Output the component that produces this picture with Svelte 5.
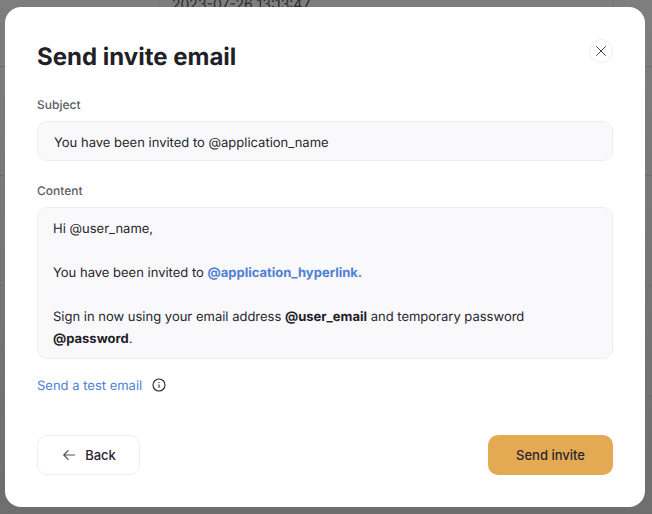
<script>
  const rows = [66, 175, 285, 396];
</script>

<div class="page">
  <div class="backdrop">
    <span class="stamp">2023-07-26 13:13:47</span>
    <i class="vline left"></i>
    <i class="vline right"></i>
    {#each rows as y}
      <i class="hline" style="top:{y}px"></i>
    {/each}
  </div>
  <div class="modal">
    <header>
      <h1>Send invite email</h1>
      <button class="close" aria-label="Close">
        <svg width="10" height="10" viewBox="0 0 10 10" fill="none" stroke="#45464d" stroke-width="1" stroke-linecap="round"><path d="M.5.5l9 9M9.5.5l-9 9"/></svg>
      </button>
    </header>
    <div class="label first">Subject</div>
    <div class="field subject">You have been invited to @application_name</div>
    <div class="label second">Content</div>
    <div class="field content">
      <p>Hi @user_name,</p>
      <p>You have been invited to <b class="link">@application_hyperlink.</b></p>
      <p>Sign in now using your email address <b>@user_email</b> and temporary password <b>@password</b>.</p>
    </div>
    <div class="test">
      <span class="testlink">Send a test email</span>
      <svg width="14" height="14" viewBox="0 0 14 14" fill="none" stroke="#26272b" stroke-width="1.1"><circle cx="7" cy="7" r="6"/><path d="M7 6.4v3.4M7 4v.9"/></svg>
    </div>
    <footer>
      <button class="back">
        <svg width="12" height="12" viewBox="0 0 12 12" fill="none" stroke="#54505c" stroke-width="1.2" stroke-linecap="round" stroke-linejoin="round"><path d="M11.5 6H.8M5.2 1.6L.8 6l4.4 4.4"/></svg>
        Back
      </button>
      <button class="send">Send invite</button>
    </footer>
  </div>
</div>

<style>
  :global(body) { margin: 0; }
  .page {
    position: relative;
    width: 652px;
    height: 514px;
    overflow: hidden;
    background: linear-gradient(#7e7e7e, #6e6e6e);
    font-family: Inter, "Liberation Sans", sans-serif;
    text-rendering: geometricPrecision;
    padding: 7px 0 0 5px;
    box-sizing: border-box;
  }
  .backdrop { position: absolute; inset: 0; }
  .stamp {
    position: absolute; left: 172px; top: -4px;
    font-size: 14px; line-height: 17px; color: #2a2a2a;
    white-space: nowrap;
  }
  .vline { position: absolute; top: 0; height: 7px; width: 1px; background: #747474; }
  .vline.left { left: 158px; }
  .vline.right { left: 613px; }
  .hline { position: absolute; left: 0; right: 0; height: 1px; background: #6c6c6c; }
  .modal {
    position: relative;
    width: 640px;
    height: 500px;
    box-sizing: border-box;
    background: #fff;
    border-radius: 16px;
    padding: 0 32px;
    display: flex;
    flex-direction: column;
  }
  header {
    display: flex;
    justify-content: space-between;
    align-items: flex-start;
    height: 82px;
    padding-top: 32px;
    box-sizing: border-box;
  }
  h1 {
    margin: 3px 0 0;
    font-size: 24px;
    line-height: 30px;
    font-weight: 700;
    color: #1f2126;
  }
  .close {
    width: 24px; height: 24px; padding: 0;
    border: 1px solid #eeeef1;
    border-radius: 50%;
    background: #fff;
    display: flex; align-items: center; justify-content: center;
  }
  .label { font-size: 12px; line-height: 16px; font-weight: 500; color: #5b5c64; }
  .first { margin-top: 8px; }
  .second { margin-top: 22px; }
  .field {
    background: #f9f9fc;
    border: 1px solid #eeeff3;
    border-radius: 10px;
    box-sizing: border-box;
    font-size: 13px;
    color: #26272b;
  }
  .subject {
    margin-top: 8px;
    height: 40px;
    line-height: 38px;
    padding: 2px 16px 0;
  }
  .content {
    margin-top: 8px;
    height: 152px;
    padding: 10px 15px 8px;
    line-height: 22px;
  }
  .content p { margin: 0 0 22px; }
  .content p:last-child { margin: 0; }
  .content b { font-weight: 700; color: #1f2126; }
  .content b.link { color: #4f80d6; font-weight: 700; }
  .test {
    margin-top: 17px;
    height: 17px;
    display: flex;
    align-items: flex-start;
    gap: 9.5px;
  }
  .test svg { margin-top: 1.5px; }
  .testlink { font-size: 13px; line-height: 17px; margin-top: 2px; font-weight: 400; color: #4f80d6; }
  footer {
    margin-top: 42px;
    display: flex;
    justify-content: space-between;
  }
  button { font-family: inherit; cursor: pointer; }
  .back, .send {
    height: 40px;
    border-radius: 10px;
    font-size: 13px;
    font-weight: 500;
    color: #2a2430;
    display: flex;
    align-items: center;
    justify-content: center;
  }
  .back {
    width: 103px;
    gap: 10px;
    padding: 0 0 0 2px;
    background: #fff;
    border: 1px solid #eeeff3;
  }
  .send {
    width: 125px;
    background: #e4aa53;
    border: none;
  }
</style>
